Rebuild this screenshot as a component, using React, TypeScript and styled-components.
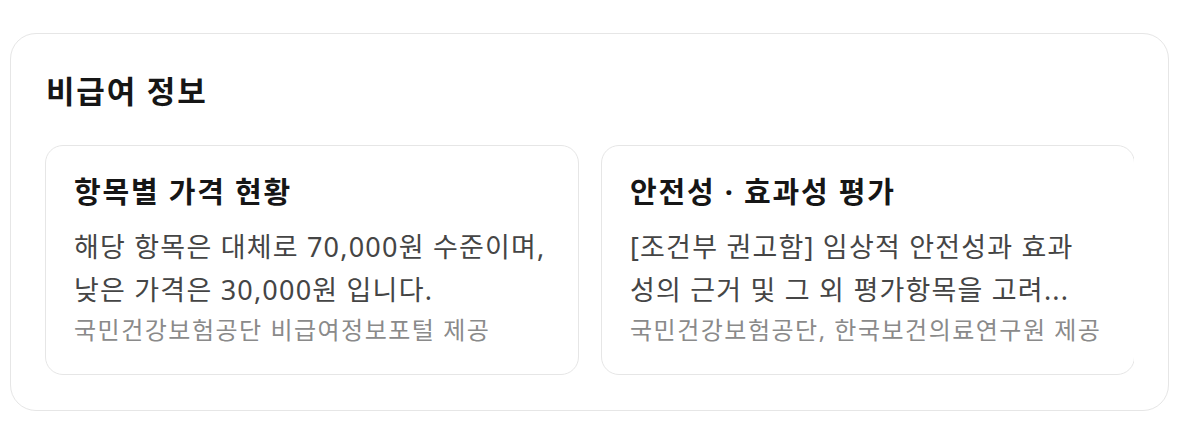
import React from 'react'
import styled, { createGlobalStyle } from 'styled-components'

type InfoItem = {
    title: string
    body: string
    source: string
}

const items: InfoItem[] = [
    {
        title: '항목별 가격 현황',
        body: '해당 항목은 대체로 70,000원 수준이며, 낮은 가격은 30,000원 입니다.',
        source: '국민건강보험공단 비급여정보포털 제공',
    },
    {
        title: '안전성 · 효과성 평가',
        body: '[조건부 권고함] 임상적 안전성과 효과\n성의 근거 및 그 외 평가항목을 고려...',
        source: '국민건강보험공단, 한국보건의료연구원 제공',
    },
]

const App: React.FC = () => {
    return (
        <>
            <GlobalStyle />
            <SectionStyled>
                <SectionTitle>비급여 정보</SectionTitle>
                <Scroller>
                    {items.map((item) => (
                        <InfoCard key={item.title}>
                            <CardTitle>{item.title}</CardTitle>
                            <CardBody>{item.body}</CardBody>
                            <CardSource>{item.source}</CardSource>
                        </InfoCard>
                    ))}
                </Scroller>
            </SectionStyled>
        </>
    )
}

export default App

const GlobalStyle = createGlobalStyle`
    html, body {
        margin: 0;
        padding: 0;
        background: #ffffff;
    }
    body {
        font-family: "Noto Sans", "Noto Sans CJK KR", sans-serif;
        color: #111;
    }
`

const SectionStyled = styled.section`
    box-sizing: border-box;
    width: 1159px;
    margin: 33px 0 0 10px;
    padding: 37px 34px 35px 34px;
    border: 1.5px solid #e6e6e6;
    border-radius: 26px;
    background: #fff;
`

const SectionTitle = styled.h2`
    margin: 0 0 34px 1px;
    font-size: 31px;
    line-height: 40px;
    font-weight: 700;
    color: #161616;
    letter-spacing: 1.8px;
`

const Scroller = styled.div`
    display: flex;
    gap: 22px;
    overflow: hidden;
`

const InfoCard = styled.div`
    box-sizing: border-box;
    flex: 0 0 534px;
    padding: 26px 25px 24px 28px;
    border: 1.5px solid #e6e6e6;
    border-radius: 18px;
    background: #fff;
`

const CardTitle = styled.h3`
    margin: 0 0 13px;
    font-size: 29px;
    line-height: 40px;
    font-weight: 700;
    color: #161616;
    letter-spacing: 1.8px;
`

const CardBody = styled.p`
    margin: 0;
    font-size: 27px;
    line-height: 43px;
    color: #454545;
    letter-spacing: 1.2px;
    white-space: pre-line;
    display: -webkit-box;
    -webkit-line-clamp: 2;
    -webkit-box-orient: vertical;
    overflow: hidden;
`

const CardSource = styled.p`
    margin: -1px 0 0;
    font-size: 24px;
    line-height: 40px;
    color: #8a8a8a;
    letter-spacing: 1.5px;
    white-space: nowrap;
`
